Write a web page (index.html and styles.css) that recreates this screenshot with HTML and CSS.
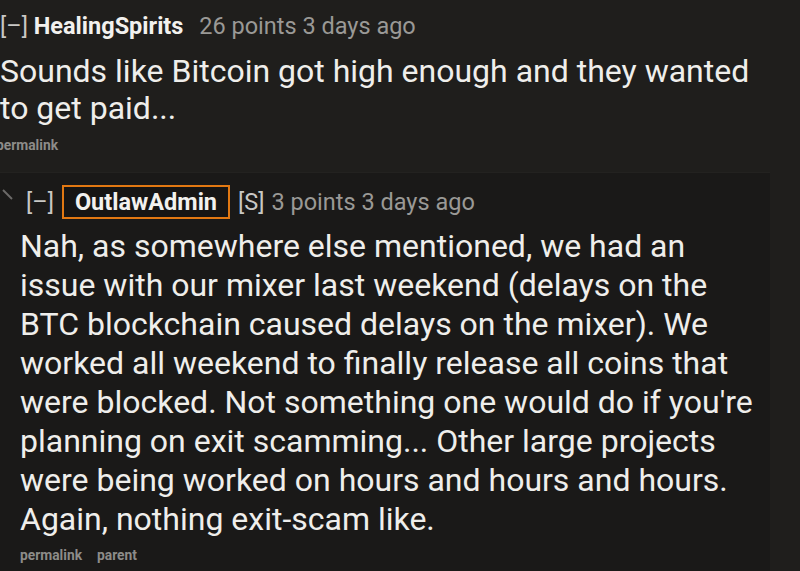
FILE: index.html
```html
<!DOCTYPE html>
<html>
<head>
<meta charset="utf-8">
<link rel="stylesheet" href="styles.css">
</head>
<body>
<div class="page">
  <div class="comment top">
    <div class="tagline"><span class="toggle">[–]</span> <span class="author">HealingSpirits</span> <span class="meta">26 points 3 days ago</span></div>
    <div class="body">Sounds like Bitcoin got high enough and they wanted<br>to get paid...</div>
    <div class="buttons"><span>permalink</span></div>
  </div>
  <div class="child">
    <div class="comment reply">
      <svg class="arrow" width="12" height="12" viewBox="0 0 12 12"><path d="M1 1 L10 10" stroke="#6b6a68" stroke-width="2" fill="none"/></svg>
      <div class="tagline"><span class="toggle">[–]</span> <span class="author boxed">OutlawAdmin</span> <span class="toggle">[S]</span><span class="meta">3 points 3 days ago</span></div>
      <div class="body">Nah, as somewhere else mentioned, we had an<br>issue with our mixer last weekend (delays on the<br>BTC blockchain caused delays on the mixer). We<br>worked all weekend to finally release all coins that<br>were blocked. Not something one would do if you're<br>planning on exit scamming... Other large projects<br>were being worked on hours and hours and hours.<br>Again, nothing exit-scam like.</div>
      <div class="buttons"><span>permalink</span><span>parent</span></div>
    </div>
  </div>
</div>
</body>
</html>
```

FILE: styles.css
```css
html, body {
  margin: 0;
  padding: 0;
  background: #1f1e1c;
  height: 100%;
  overflow: hidden;
}
body {
  font-family: Roboto, "Liberation Sans", sans-serif;
  color: #ecebe8;
}
.page {
  width: 800px;
  height: 571px;
  display: flex;
  flex-direction: column;
}
.comment.top {
  padding: 12px 0 0 0;
  height: 172px;
  box-sizing: border-box;
}
.tagline {
  font-size: 23.5px;
  line-height: 28px;
  color: #b9b8b5;
  white-space: nowrap;
}
.toggle {
  color: #c9c8c5;
}
.author {
  font-weight: 700;
  color: #f2f1ee;
}
.meta {
  color: #9a9996;
  margin-left: 10px;
}
.body {
  font-size: 32px;
  line-height: 37px;
  color: #efeeeb;
  white-space: nowrap;
}
.top .body {
  margin-top: 13px;
}
.top .buttons {
  margin-left: -4px;
  margin-top: 11px;
}
.buttons {
  font-size: 13.8px;
  line-height: 15px;
  font-weight: 700;
  color: #8d8c89;
  display: flex;
  gap: 15px;
}
.child {
  flex: 1;
  background: #1a1918;
  margin-right: 30px;
  border-top: 1px solid #232220;
  position: relative;
}
.comment.reply {
  position: relative;
  padding: 12px 0 0 20px;
}
.arrow {
  position: absolute;
  left: 2px;
  top: 16px;
}
.reply .tagline {
  display: flex;
  align-items: center;
  gap: 8px;
  margin-left: 6px;
}
.boxed {
  border: 2px solid #e27812;
  padding: 1px 11px 1px 11px;
  background: #161514;
}
.reply .meta {
  margin-left: -1px;
}
.reply .body {
  margin-top: 8px;
  line-height: 39px;
}
.reply .buttons {
  margin-top: 9px;
}
```
